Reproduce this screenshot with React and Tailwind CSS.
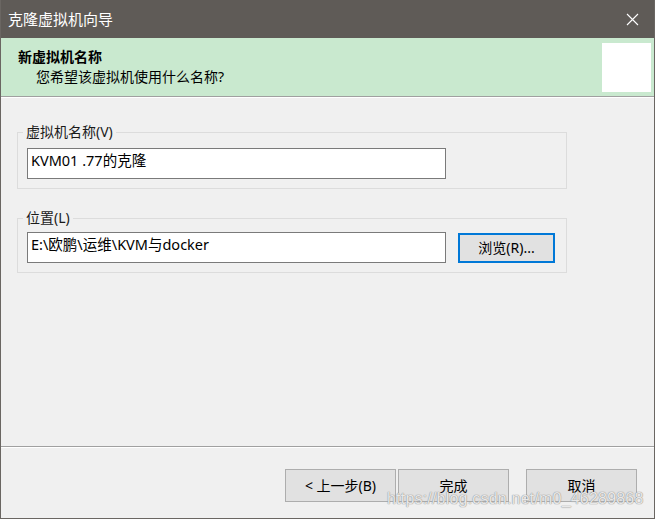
import React from "react";

function Group({ label, children, className = "" }) {
  return (
    <div className={`relative border border-[#dcdcdc] w-[550px] pl-[9px] pb-[9px] ${className}`}>
      <span className="absolute left-[5px] -top-[11px] bg-[#f0f0f0] px-[3px] leading-[20px] text-[14px] text-[#1a1a1a]">
        {label}
      </span>
      {children}
    </div>
  );
}

function FooterButton({ children, className = "" }) {
  return (
    <button
      className={`w-[111px] h-[33px] bg-[#e1e1e1] border border-[#adadad] text-[14px] text-black flex items-center justify-center ${className}`}
    >
      {children}
    </button>
  );
}

export default function App() {
  return (
    <div
      className="relative w-[655px] h-[519px] flex flex-col bg-[#f0f0f0] border-x border-b border-[#6a6662] overflow-hidden"
      style={{ fontFamily: '"Noto Sans", "Noto Sans CJK SC", sans-serif' }}
    >
      {/* title bar */}
      <div className="h-[38px] shrink-0 bg-[#5f5b57] flex items-center justify-between pl-[8px] pr-[16px] -mx-px">
        <span className="text-white text-[15px]">克隆虚拟机向导</span>
        <svg width="13" height="13" viewBox="0 0 13 13">
          <path d="M1 1 L12 12 M12 1 L1 12" stroke="#fff" strokeWidth="1.1" />
        </svg>
      </div>

      {/* header */}
      <div className="h-[58px] shrink-0 bg-[#c9e9cf] flex justify-between pr-[3px]">
        <div className="pl-[17px] pt-[9px]">
          <div className="text-[14px] font-bold leading-[20px] text-black">新虚拟机名称</div>
          <div className="text-[14px] leading-[20px] pl-[18px] text-black">您希望该虚拟机使用什么名称?</div>
        </div>
        <div className="w-[49px] h-[49px] bg-white mt-[5px]" />
      </div>
      <div className="h-px bg-[#a0a0a0] shrink-0" />
      <div className="h-px bg-white shrink-0" />

      {/* content */}
      <div className="flex-1 pl-[16px] pt-[34px] flex flex-col gap-[29px]">
        <Group label="虚拟机名称(V)" className="pt-[15px]">
          <div className="w-[419px] h-[31px] bg-white border border-[#7a7a7a] flex items-center px-[3px] pb-[5px] text-[14.5px] text-black">
            KVM01 .77的克隆
          </div>
        </Group>
        <Group label="位置(L)" className="pt-[13px]">
          <div className="flex items-center gap-[12px]">
            <div className="w-[419px] h-[31px] bg-white border border-[#7a7a7a] flex items-center px-[3px] pb-[5px] text-[14.5px] text-black">
              E:\欧鹏\运维\KVM与docker
            </div>
            <button className="w-[97px] h-[30px] bg-[#e1e1e1] border-2 border-[#0078d7] text-[14px] text-black flex items-center justify-center">
              浏览(R)...
            </button>
          </div>
        </Group>
      </div>

      <div className="h-px bg-[#a0a0a0] shrink-0" />
      <div className="h-px bg-white shrink-0" />

      {/* footer */}
      <div className="h-[70px] shrink-0 flex justify-end items-start pt-[21px] pr-[17px]">
        <FooterButton>&lt; 上一步(B)</FooterButton>
        <FooterButton className="ml-[2px]">完成</FooterButton>
        <FooterButton className="ml-[17px]">取消</FooterButton>
      </div>

      <span
        className="absolute left-[386px] top-[487px] text-[16px] text-white/80 [text-shadow:0_0_1px_#8a8a8a,0_0_1px_#8a8a8a] tracking-[0.2px]"
        style={{ fontFamily: '"Liberation Sans", sans-serif' }}
      >
        https://blog.csdn.net/m0_46289868
      </span>
    </div>
  );
}
